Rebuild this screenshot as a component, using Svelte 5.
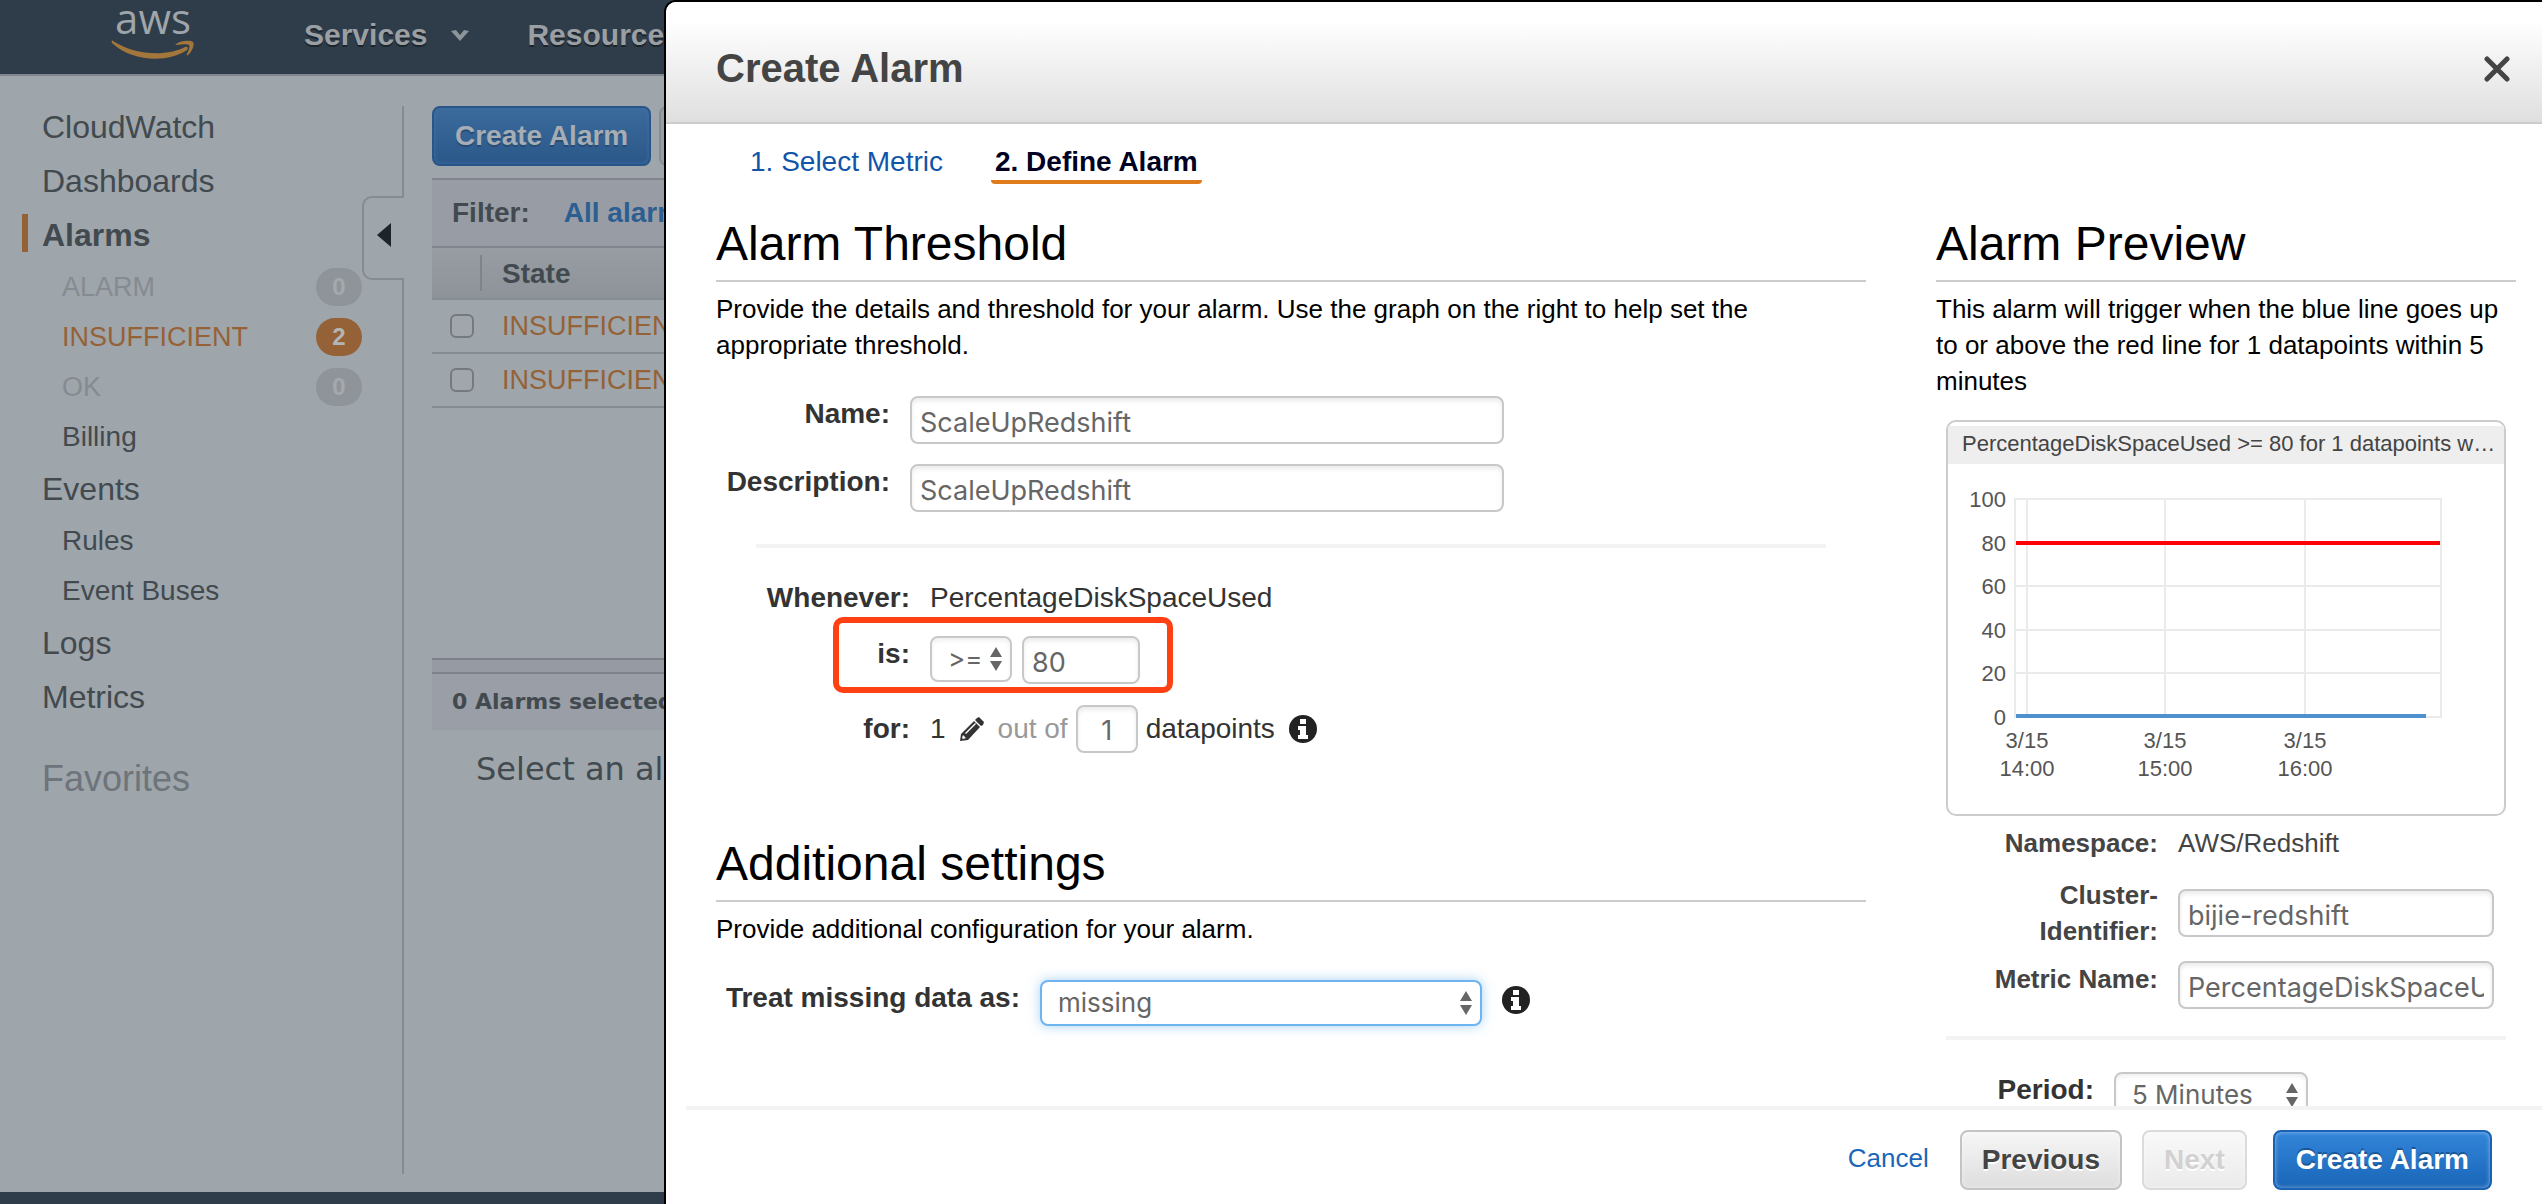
<script lang="ts">
  let name = 'ScaleUpRedshift';
  let description = 'ScaleUpRedshift';
  let operator = '>=';
  let threshold = '80';
  let datapoints = '1';
  let missingData = 'missing';
  let cluster = 'bijie-redshift';
  let metricName = 'PercentageDiskSpaceUsed';
  let period = '5 Minutes';

  const navItems = [
    { label: 'CloudWatch' },
    { label: 'Dashboards' },
    { label: 'Alarms', active: true },
    { label: 'ALARM', sub: true, state: 'muted', count: 0 },
    { label: 'INSUFFICIENT', sub: true, state: 'warn', count: 2 },
    { label: 'OK', sub: true, state: 'muted', count: 0 },
    { label: 'Billing', sub: true },
    { label: 'Events' },
    { label: 'Rules', sub: true },
    { label: 'Event Buses', sub: true },
    { label: 'Logs' },
    { label: 'Metrics' },
  ];

  const alarms = ['INSUFFICIENT', 'INSUFFICIENT'];

  // chart geometry, in svg units
  const plot = { left: 67, right: 493, top: 35, bottom: 253 };
  const yTicks = [100, 80, 60, 40, 20, 0];
  const xTicks = [
    { x: 79, day: '3/15', time: '14:00' },
    { x: 217, day: '3/15', time: '15:00' },
    { x: 357, day: '3/15', time: '16:00' },
  ];
  const yPos = (v: number) => Math.round(plot.bottom - (v / 100) * (plot.bottom - plot.top));
</script>

{#snippet arrows()}
  <svg class="arrows" width="12" height="24" viewBox="0 0 12 24" aria-hidden="true">
    <path d="M6 0 L12 10 H0 Z M0 14 H12 L6 24 Z" fill="#666" />
  </svg>
{/snippet}

{#snippet info()}
  <svg class="info" width="28" height="28" viewBox="0 0 28 28" aria-hidden="true">
    <circle cx="14" cy="14" r="14" fill="#222" />
    <path d="M11 4h6v5h-6z M9 11h8v9h2v4H9v-4h2v-5H9z" fill="#fff" />
  </svg>
{/snippet}

<div class="page">
  <header class="topbar">
    <svg class="logo" width="82" height="64" viewBox="0 0 82 64" role="img" aria-label="aws">
      <text x="41" y="33" text-anchor="middle">aws</text>
      <path d="M1 40 C22 54 54 56 73 46 C75 45 77 47 75 49 C56 62 20 61 0 42 C-1 40 0 39 1 40 Z" fill="#a3763c" />
      <path d="M64 43 C69 39 79 39 81 41 C83 43 80 51 76 54 C75 55 74 54 75 53 C77 49 78 45 77 44 C76 43 70 43 65 44 C63 44 63 43 64 43 Z" fill="#a3763c" />
    </svg>
    <a class="services" href="#services">Services
      <svg width="18" height="11" viewBox="0 0 18 11" aria-hidden="true"><path d="M0 1 L5 0 L9 5 L13 0 L18 1 L9 11 Z" fill="#8d949a" /></svg>
    </a>
    <a href="#groups">Resource Groups</a>
  </header>

  <div class="console">
    <nav>
      {#each navItems as item}
        <a class="item {item.state ?? ''}" class:sub={item.sub} class:active={item.active} href="#nav">
          {item.label}
          {#if item.count !== undefined}
            <span class="badge">{item.count}</span>
          {/if}
        </a>
      {/each}
      <div class="favorites">Favorites</div>
    </nav>

    <div class="rail">
      <button class="collapse" aria-label="Collapse">
        <svg width="14" height="24" viewBox="0 0 14 24" aria-hidden="true"><path d="M14 0 V24 L0 12 Z" fill="#1d252b" /></svg>
      </button>
    </div>

    <main>
      <div class="toolbar">
        <button class="btn dim">Create Alarm</button>
        <button class="btn dim-plain" aria-label="Actions"></button>
      </div>
      <div class="filter"><b>Filter:</b> <a href="#all">All alarms</a></div>
      <div class="list">
        <table>
          <thead>
            <tr><th class="tick"><span></span></th><th>State</th></tr>
          </thead>
          <tbody>
            {#each alarms as state}
              <tr>
                <td class="tick"><input type="checkbox" aria-label="Select alarm" /></td>
                <td>{state}</td>
              </tr>
            {/each}
          </tbody>
        </table>
      </div>
      <div class="splitter"></div>
      <div class="selected">0 Alarms selected</div>
      <p class="hint">Select an alarm above</p>
    </main>
  </div>
  <footer class="bottombar"></footer>

  <div class="dialog" role="dialog" aria-label="Create Alarm">
    <div class="dialog-head">
      <h1>Create Alarm</h1>
      <button class="close" aria-label="Close">
        <svg width="26" height="26" viewBox="0 0 26 26"><path d="M3 3 L23 23 M23 3 L3 23" stroke="#444" stroke-width="5" stroke-linecap="round" /></svg>
      </button>
    </div>

    <div class="dialog-body">
      <div class="tabs">
        <a href="#metric">1. Select Metric</a>
        <a class="current" href="#define">2. Define Alarm</a>
      </div>

      <div class="columns">
        <section class="settings">
          <h2>Alarm Threshold</h2>
          <p class="lead">Provide the details and threshold for your alarm. Use the graph on the right to help set the appropriate threshold.</p>
          <div class="rows">
            <div class="row basic">
              <label for="name">Name:</label>
              <input id="name" class="wide" type="text" bind:value={name} />
            </div>
            <div class="row basic">
              <label for="description">Description:</label>
              <input id="description" class="wide" type="text" bind:value={description} />
            </div>
          </div>

          <hr />

          <div class="rows">
            <div class="row rule">
              <span class="label">Whenever:</span>
              <span class="value">PercentageDiskSpaceUsed</span>
            </div>
            <div class="row rule">
              <label for="operator">is:</label>
              <div class="inline">
                <span class="select operator">
                  <select id="operator" bind:value={operator}>
                    <option>&gt;=</option>
                    <option>&gt;</option>
                  </select>
                  {@render arrows()}
                </span>
                <input class="number" type="text" aria-label="Threshold" bind:value={threshold} />
              </div>
              <div class="highlight"></div>
            </div>
            <div class="row rule">
              <label class="tall" for="datapoints">for:</label>
              <div class="periods">
                <span>1</span>
                <svg class="pencil" width="24" height="24" viewBox="0 0 24 24" aria-hidden="true">
                  <path d="M17 1 L19 0 L24 5 L23 8 L21 9 L15 3 Z M14 4 L20 10 L8 23 L0 24 L1 17 Z" fill="#333" />
                  <path d="M3 18 L6 21 L3 22 L2 21 Z M5 16 L15 6 L16 7 L6 17 Z" fill="#fff" />
                </svg>
                <span class="faint">out of</span>
                <input id="datapoints" class="count" type="text" bind:value={datapoints} />
                <span>datapoints</span>
                {@render info()}
              </div>
            </div>
          </div>

          <h2 class="additional">Additional settings</h2>
          <p class="lead">Provide additional configuration for your alarm.</p>
          <div class="row missing">
            <label for="missing">Treat missing data as:</label>
            <span class="select focused">
              <select id="missing" bind:value={missingData}>
                <option>missing</option>
                <option>good</option>
              </select>
              {@render arrows()}
            </span>
            {@render info()}
          </div>
        </section>

        <section class="preview">
          <h2>Alarm Preview</h2>
          <p class="lead">This alarm will trigger when the blue line goes up to or above the red line for 1 datapoints within 5 minutes</p>

          <div class="graph">
            <div class="graph-title">PercentageDiskSpaceUsed &gt;= 80 for 1 datapoints w…</div>
            <svg width="556" height="350" viewBox="0 0 556 350">
              {#each yTicks as tick}
                <line x1={plot.left - 1} x2={plot.right + 1} y1={yPos(tick)} y2={yPos(tick)} />
                <text x="58" y={yPos(tick) + 8} text-anchor="end">{tick}</text>
              {/each}
              <line x1={plot.left} x2={plot.left} y1={plot.top} y2={plot.bottom} />
              <line x1={plot.right} x2={plot.right} y1={plot.top} y2={plot.bottom} />
              {#each xTicks as tick}
                <line x1={tick.x} x2={tick.x} y1={plot.top} y2={plot.bottom} />
                <text x={tick.x} y="284" text-anchor="middle">{tick.day}</text>
                <text x={tick.x} y="312" text-anchor="middle">{tick.time}</text>
              {/each}
              <line class="limit" x1="68" x2="492" y1={yPos(80)} y2={yPos(80)} />
              <line class="series" x1="68" x2="478" y1="252" y2="252" />
            </svg>
          </div>

          <div class="row detail">
            <span class="label">Namespace:</span>
            <span class="value">AWS/Redshift</span>
          </div>
          <div class="row detail centered">
            <label for="cluster">Cluster-Identifier:</label>
            <input id="cluster" type="text" bind:value={cluster} />
          </div>
          <div class="row detail">
            <label for="metric">Metric Name:</label>
            <input id="metric" type="text" bind:value={metricName} />
          </div>
          <hr />
          <div class="row period">
            <label for="period">Period:</label>
            <span class="select">
              <select id="period" bind:value={period}>
                <option>5 Minutes</option>
                <option>1 Hour</option>
              </select>
              {@render arrows()}
            </span>
          </div>
        </section>
      </div>
    </div>

    <div class="dialog-foot">
      <a href="#cancel">Cancel</a>
      <button class="btn">Previous</button>
      <button class="btn" disabled>Next</button>
      <button class="btn primary">Create Alarm</button>
    </div>
  </div>
</div>

<style>
  :global(body) {
    font-family: 'Liberation Sans', Arial, sans-serif;
    font-size: 28px;
  }

  .page, .page :global(*) {
    box-sizing: border-box;
  }

  .page {
    position: relative;
    display: flex;
    flex-direction: column;
    height: 100vh;
    overflow: hidden;
    background: #9ea5ab;
    color: #424a4f;
  }

  a {
    color: inherit;
    text-decoration: none;
  }

  button, input, select {
    font: inherit;
    margin: 0;
  }

  .topbar {
    display: flex;
    align-items: center;
    gap: 58px;
    height: 76px;
    padding: 0 0 4px 112px;
    background: #2f3c49;
    border-bottom: 2px solid #81878e;
    color: #9a9fa4;
    font-size: 30px;
    font-weight: bold;
    text-shadow: 0 2px 0 #1c242c;
    white-space: nowrap;
  }

  .logo {
    overflow: visible;
    margin: 0 52px 4px 0;
    text-shadow: none;
  }

  .logo text {
    font-family: 'Open Sans', sans-serif;
    font-size: 42px;
    font-weight: 500;
    fill: #9ea5ab;
  }

  .services {
    display: flex;
    align-items: center;
    gap: 24px;
  }

  .console {
    display: flex;
    flex: 1;
    min-height: 0;
  }

  nav {
    width: 362px;
    padding-top: 24px;
  }

  .item {
    display: flex;
    align-items: center;
    justify-content: space-between;
    height: 54px;
    padding-left: 42px;
    font-size: 32px;
  }

  .item.sub {
    height: 50px;
    padding-left: 62px;
    font-size: 28px;
  }

  .item.active {
    position: relative;
    font-weight: bold;
  }

  .item.active::before {
    content: '';
    position: absolute;
    left: 22px;
    top: 6px;
    width: 6px;
    height: 38px;
    background: #956237;
  }

  .item.muted {
    color: #868b91;
  }

  .item.warn {
    color: #956237;
  }

  .item.muted, .item.warn {
    font-size: 27px;
  }

  .badge {
    width: 46px;
    height: 38px;
    border-radius: 19px;
    background: #8f949b;
    color: #a3a9af;
    font-size: 24px;
    font-weight: bold;
    line-height: 38px;
    text-align: center;
  }

  .warn .badge {
    background: #956237;
    color: #b3b5b6;
  }

  .favorites {
    padding: 34px 0 0 42px;
    color: #6d747a;
    font-size: 36px;
  }

  .rail {
    position: relative;
    width: 42px;
    margin: 30px 0 18px;
    border-right: 2px solid #868a92;
  }

  .collapse {
    position: absolute;
    top: 90px;
    left: 0;
    right: -2px;
    height: 84px;
    padding: 0 0 0 13px;
    border: 2px solid #868a92;
    border-right: 0;
    border-radius: 10px 0 0 10px;
    background: #9ea5ab;
    text-align: left;
  }

  main {
    flex: 1;
    min-width: 0;
    padding: 30px 0 0 28px;
  }

  .toolbar {
    display: flex;
    gap: 8px;
    margin-bottom: 12px;
  }

  .btn {
    height: 60px;
    padding: 0 20px;
    border: 2px solid #c4c4c4;
    border-radius: 8px;
    background: linear-gradient(#f6f6f6, #dedede);
    box-shadow: inset 0 0 4px rgba(255, 255, 255, 0.5);
    color: #444;
    font-weight: bold;
    text-shadow: 0 2px 0 #fff;
  }

  .btn:disabled {
    opacity: 0.6;
    color: #b4b4b4;
  }

  .btn.primary {
    margin-left: 6px;
    padding: 0 21px;
    border-color: #1a62b3;
    background: linear-gradient(#3285d9, #1a66b8);
    color: #fff;
    text-shadow: 0 -2px 0 #1b5696;
  }

  .btn.dim {
    padding: 0 21px;
    border-color: #28568a;
    background: linear-gradient(#3b6a9c, #2a5889);
    box-shadow: inset 0 0 4px #4270a0;
    color: #a6adb4;
    text-shadow: 0 2px 0 #274c73;
  }

  .btn.dim-plain {
    width: 140px;
    border-color: #878d94;
    background: #989ea5;
    box-shadow: none;
  }

  .filter {
    display: flex;
    align-items: center;
    gap: 34px;
    height: 70px;
    padding-left: 20px;
    border: solid #81868e;
    border-width: 2px 0;
    background: #989ca4;
    white-space: nowrap;
  }

  .filter a {
    color: #2b5f92;
    font-weight: bold;
  }

  .list {
    min-height: 410px;
  }

  table {
    width: 100%;
    border-collapse: separate;
    border-spacing: 0;
  }

  th, td {
    height: 54px;
    padding: 0 0 0 20px;
    border-bottom: 2px solid #878c93;
    text-align: left;
  }

  th {
    height: 52px;
    padding-top: 2px;
    background: linear-gradient(#989da4, #8e9299);
  }

  td {
    color: #956237;
    font-size: 27px;
  }

  .tick {
    width: 50px;
    padding: 0 0 0 18px;
  }

  .tick span {
    display: block;
    height: 36px;
    margin-left: 12px;
    border-right: 2px solid #7f848b;
  }

  .tick input {
    display: block;
    appearance: none;
    width: 24px;
    height: 24px;
    border: 2px solid #757a80;
    border-radius: 6px;
    background: #a0a6ac;
  }

  .splitter {
    height: 16px;
    border: solid #7d828a;
    border-width: 2px 0;
    background: #969aa2;
  }

  .selected {
    padding-left: 20px;
    background: #9a9ea6;
    font: bold 22px/56px 'DejaVu Sans', Verdana, sans-serif;
    white-space: nowrap;
  }

  .hint {
    margin: 19px 0 0 44px;
    font: 32px/40px 'DejaVu Sans', Verdana, sans-serif;
    white-space: nowrap;
  }

  .bottombar {
    height: 12px;
    background: #2f3c49;
  }

  .dialog {
    position: absolute;
    inset: 0 0 0 664px;
    display: flex;
    flex-direction: column;
    border: solid #000;
    border-width: 2px 0 0 2px;
    border-radius: 12px 0 0 0;
    background: #fff;
    color: #333;
  }

  .dialog-head {
    display: flex;
    align-items: center;
    justify-content: space-between;
    height: 122px;
    padding: 0 32px 0 50px;
    border-bottom: 2px solid #ccc;
    border-radius: 10px 0 0 0;
    background: linear-gradient(#fff 15%, #dfdfdf);
  }

  h1 {
    margin: 0;
    padding-top: 12px;
    color: #444;
    font-size: 40px;
  }

  .close {
    display: flex;
    padding: 14px 0 0;
    border: 0;
    background: none;
  }

  .dialog-body {
    flex: 1;
    min-height: 0;
    padding: 20px 26px 0 50px;
    overflow: hidden;
  }

  .tabs {
    display: flex;
    gap: 46px;
    margin: 0 0 30px 32px;
    color: #1155ab;
    line-height: 36px;
  }

  .tabs a {
    padding: 0 2px;
    border-bottom: 4px solid transparent;
  }

  .tabs .current {
    padding: 0 4px;
    border-color: #e07b1b;
    border-radius: 0 0 4px 4px;
    color: #002;
    font-weight: bold;
  }

  .columns {
    display: flex;
    gap: 70px;
  }

  .settings {
    flex: 1;
    min-width: 0;
  }

  .preview {
    width: 580px;
  }

  h2 {
    margin: 0;
    padding-bottom: 6px;
    border-bottom: 2px solid #ccc;
    color: #000;
    font-size: 48px;
    font-weight: normal;
    line-height: 60px;
  }

  h2.additional {
    margin-top: 80px;
  }

  .lead {
    margin: 9px 0 33px;
    color: #000;
    font-size: 26px;
    line-height: 36px;
  }

  .preview .lead {
    margin-bottom: 21px;
  }

  .rows {
    display: flex;
    flex-direction: column;
    gap: 20px;
  }

  .row {
    position: relative;
    display: flex;
    align-items: flex-start;
    gap: 20px;
    line-height: 36px;
  }

  label, .label {
    font-weight: bold;
    text-align: right;
  }

  .basic label {
    width: 174px;
  }

  .rule label, .rule .label {
    width: 194px;
  }

  .missing label {
    width: 304px;
  }

  .tall {
    line-height: 50px;
  }

  input[type='text'] {
    width: 100%;
    height: 48px;
    padding: 4px 8px 0;
    border: 2px solid #c8c8c8;
    border-radius: 8px;
    background: #fff;
    box-shadow: inset 0 3px 4px rgba(0, 0, 0, 0.08);
    color: #666;
    font-family: Inter, 'Liberation Sans', sans-serif;
    font-size: 27px;
  }

  input.wide {
    width: 594px;
  }

  input.number {
    width: 118px;
  }

  input.count {
    width: 62px;
    text-align: center;
  }

  hr {
    height: 4px;
    margin: 32px 40px;
    border: 0;
    background: #f3f3f3;
  }

  .preview hr {
    margin: 27px 10px 32px;
  }

  .inline {
    display: flex;
    gap: 10px;
  }

  .select {
    position: relative;
    width: 194px;
  }

  .select.operator {
    width: 82px;
  }

  select {
    display: block;
    appearance: none;
    width: 100%;
    height: 46px;
    padding: 0 16px;
    border: 2px solid #c8c8c8;
    border-radius: 8px;
    background: #fff;
    box-shadow: inset 0 3px 4px rgba(0, 0, 0, 0.06);
    color: #666;
    font-family: Inter, 'Liberation Sans', sans-serif;
    font-size: 26px;
  }

  .operator select {
    padding: 0 0 0 16px;
  }

  .arrows {
    position: absolute;
    right: 10px;
    top: 11px;
    pointer-events: none;
  }

  .select.focused {
    width: 442px;
  }

  .focused select {
    border-color: #6eb4f0;
    box-shadow: 0 0 12px rgba(82, 168, 236, 0.5);
  }

  .missing .info {
    margin-top: 6px;
  }

  .highlight {
    position: absolute;
    left: 117px;
    top: -19px;
    width: 340px;
    height: 76px;
    border: 6px solid #ff4013;
    border-radius: 10px;
    pointer-events: none;
  }

  .periods {
    display: flex;
    align-items: center;
    gap: 8px;
    line-height: 50px;
  }

  .periods > * {
    flex-shrink: 0;
  }

  .pencil {
    margin: 0 6px;
  }

  .periods .info {
    margin-left: 6px;
  }

  .faint {
    color: #999;
  }

  .graph {
    margin: 0 10px 9px;
    padding-top: 4px;
    border: 2px solid #ccc;
    border-radius: 10px;
  }

  .graph svg {
    display: block;
  }

  .graph-title {
    padding: 0 2px 2px 14px;
    overflow: hidden;
    background: #eee;
    color: #444;
    font-size: 22px;
    line-height: 36px;
    text-overflow: ellipsis;
    white-space: nowrap;
  }

  .graph line {
    stroke: #ebebeb;
    stroke-width: 2;
  }

  .graph text {
    fill: #555;
    font-size: 22px;
  }

  .graph .limit {
    stroke: #f00;
    stroke-width: 4;
  }

  .graph .series {
    stroke: #4f91cd;
    stroke-width: 4;
  }

  .detail {
    min-height: 40px;
    margin-bottom: 12px;
    padding-right: 22px;
    color: #444;
    font-size: 26px;
  }

  .detail.centered {
    align-items: center;
  }

  .detail label, .detail .label {
    flex-shrink: 0;
    width: 222px;
    padding-left: 10px;
  }

  .detail:has(+ hr) {
    margin-bottom: 0;
  }

  .period label {
    width: 158px;
  }

  .dialog-foot {
    display: flex;
    align-items: center;
    justify-content: flex-end;
    gap: 20px;
    height: 98px;
    margin-left: 20px;
    padding: 6px 50px 0 0;
    border-top: 4px solid #f3f3f3;
    background: #fff;
  }

  .dialog-foot a {
    margin: 0 11px 4px 0;
    color: #1a66b8;
    font-size: 26px;
  }
</style>
